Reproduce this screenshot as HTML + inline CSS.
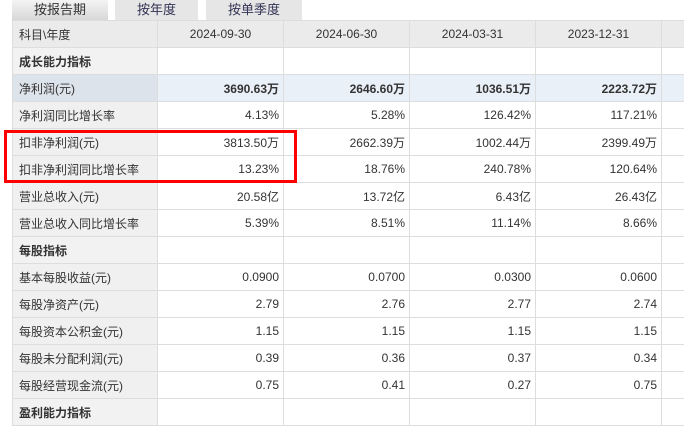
<!DOCTYPE html>
<html><head><meta charset="utf-8"><style>
body{margin:0;width:684px;height:423px;overflow:hidden;background:#fff;font-family:"Liberation Sans","Noto Sans CJK SC",sans-serif;font-size:12px;color:#333;position:relative}
.tab{position:absolute;top:0;height:21px;line-height:19px;text-align:center;font-size:13px;background:#e6e6e6;color:#335}
table{position:absolute;left:12px;top:20px;border-collapse:collapse;table-layout:fixed;width:690px}
td{height:26px;border:1px solid #ddd;padding:0 6px;white-space:nowrap;overflow:hidden}
td.l{background:#f0f0f0;text-align:left}
td.n{text-align:right;padding-right:4px}
tr.h td{background:#ebebeb;text-align:center}
tr.h td.l{text-align:left}
tr.s td{font-weight:bold;background:#fff}
tr.s td.l{background:#f2f2f2}
tr.hl td{background:#e9f0f8;font-weight:bold}
tr.hl td.l{background:#dde3ea;font-weight:normal}
.box{position:absolute;left:4px;top:130px;width:287px;height:47px;border:3px solid #f00}
</style></head><body>
<div class="tab" style="left:12px;width:96px;background:linear-gradient(#f4f4f4,#d6d6d6);color:#333">按报告期</div>
<div class="tab" style="left:115px;width:83px">按年度</div>
<div class="tab" style="left:206px;width:96px">按单季度</div>
<table>
<colgroup><col style="width:145px"><col style="width:126px"><col style="width:126px"><col style="width:126px"><col style="width:126px"><col style="width:41px"></colgroup>
<tr class="h"><td class="l">科目\年度</td><td>2024-09-30</td><td>2024-06-30</td><td>2024-03-31</td><td>2023-12-31</td><td></td></tr>
<tr class="s"><td class="l">成长能力指标</td><td></td><td></td><td></td><td></td><td></td></tr>
<tr class="hl"><td class="l">净利润(元)</td><td class="n">3690.63万</td><td class="n">2646.60万</td><td class="n">1036.51万</td><td class="n">2223.72万</td><td></td></tr>
<tr><td class="l">净利润同比增长率</td><td class="n">4.13%</td><td class="n">5.28%</td><td class="n">126.42%</td><td class="n">117.21%</td><td></td></tr>
<tr><td class="l">扣非净利润(元)</td><td class="n">3813.50万</td><td class="n">2662.39万</td><td class="n">1002.44万</td><td class="n">2399.49万</td><td></td></tr>
<tr><td class="l">扣非净利润同比增长率</td><td class="n">13.23%</td><td class="n">18.76%</td><td class="n">240.78%</td><td class="n">120.64%</td><td></td></tr>
<tr><td class="l">营业总收入(元)</td><td class="n">20.58亿</td><td class="n">13.72亿</td><td class="n">6.43亿</td><td class="n">26.43亿</td><td></td></tr>
<tr><td class="l">营业总收入同比增长率</td><td class="n">5.39%</td><td class="n">8.51%</td><td class="n">11.14%</td><td class="n">8.66%</td><td></td></tr>
<tr class="s"><td class="l">每股指标</td><td></td><td></td><td></td><td></td><td></td></tr>
<tr><td class="l">基本每股收益(元)</td><td class="n">0.0900</td><td class="n">0.0700</td><td class="n">0.0300</td><td class="n">0.0600</td><td></td></tr>
<tr><td class="l">每股净资产(元)</td><td class="n">2.79</td><td class="n">2.76</td><td class="n">2.77</td><td class="n">2.74</td><td></td></tr>
<tr><td class="l">每股资本公积金(元)</td><td class="n">1.15</td><td class="n">1.15</td><td class="n">1.15</td><td class="n">1.15</td><td></td></tr>
<tr><td class="l">每股未分配利润(元)</td><td class="n">0.39</td><td class="n">0.36</td><td class="n">0.37</td><td class="n">0.34</td><td></td></tr>
<tr><td class="l">每股经营现金流(元)</td><td class="n">0.75</td><td class="n">0.41</td><td class="n">0.27</td><td class="n">0.75</td><td></td></tr>
<tr class="s"><td class="l">盈利能力指标</td><td></td><td></td><td></td><td></td><td></td></tr>
</table>
<div class="box"></div>
</body></html>
